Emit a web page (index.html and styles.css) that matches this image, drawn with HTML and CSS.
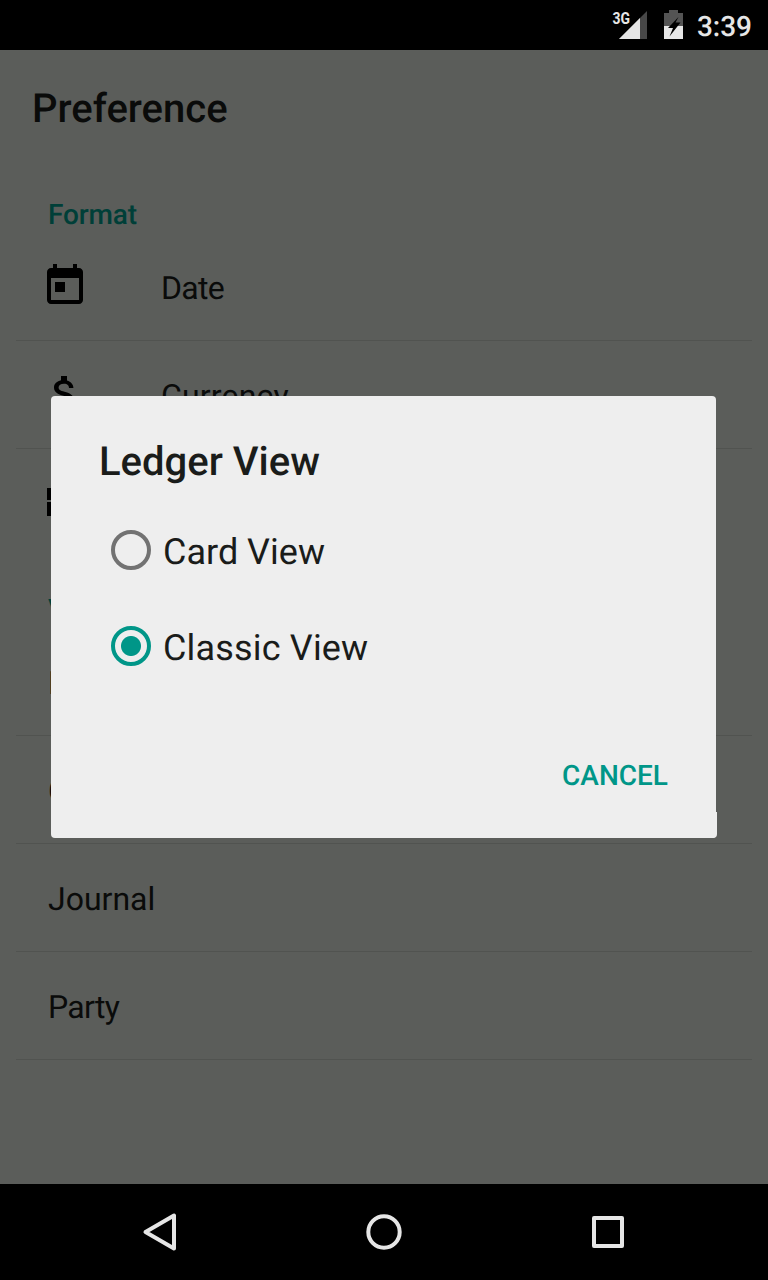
FILE: index.html
```
<!DOCTYPE html>
<html lang="en">
<head>
<meta charset="utf-8">
<title>Preference</title>
<link rel="stylesheet" href="styles.css">
</head>
<body>
<div class="phone">
  <header class="status-bar">
    <svg class="signal" width="36" height="30" viewBox="0 0 36 30">
      <path d="M35 1v28H7z" fill="#474747"/>
      <path d="M28 8v21H7z" fill="#e6e6e6"/>
      <text class="network" x="0.5" y="13.5" textLength="17.5" lengthAdjust="spacingAndGlyphs">3G</text>
    </svg>
    <svg class="battery" width="19" height="29" viewBox="0 0 19 29">
      <path d="M0 3h5V0h9v3h5v13H0z" fill="#545454"/>
      <path d="M0 16h19v13H0z" fill="#e6e6e6"/>
      <path d="M14.500 7L4 18h5l-3.500 8.500L16.500 12.500h-5z" fill="#000"/>
    </svg>
    <span class="clock">3:39</span>
  </header>

  <main class="screen">
    <h1 class="page-title">Preference</h1>

    <section class="group">
      <h2 class="group-title">Format</h2>
      <div class="row">
        <svg class="row-icon" viewBox="0 0 24 24"><path d="M19 3h-1V1h-2v2H8V1H6v2H5c-1.100 0-2 .9-2 2v14c0 1.100.9 2 2 2h14c1.100 0 2-.9 2-2V5c0-1.100-.9-2-2-2zm0 16H5V8h14v11zM7 10h5v5H7z"/></svg>
        <span class="row-label tight">Date</span>
      </div>
      <div class="row">
        <svg class="row-icon" viewBox="0 0 24 24"><path d="M11.800 10.900c-2.270-.59-3-1.200-3-2.150 0-1.090 1.010-1.850 2.700-1.850 1.780 0 2.440.85 2.500 2.100h2.210c-.07-1.720-1.120-3.300-3.210-3.810V3h-3v2.160c-1.940.42-3.500 1.680-3.500 3.610 0 2.310 1.910 3.460 4.700 4.130 2.500.6 3 1.480 3 2.410 0 .69-.49 1.790-2.700 1.790-2.060 0-2.870-.92-2.980-2.100h-2.200c.12 2.190 1.760 3.420 3.680 3.830V21h3v-2.150c1.950-.37 3.500-1.500 3.500-3.550 0-2.840-2.430-3.810-4.700-4.400z"/></svg>
        <span class="row-label loose">Currency</span>
      </div>
      <div class="row row-last">
        <svg class="row-icon" viewBox="0 0 24 24"><path d="M3 19h6v-7H3v7zm7 0h12v-7H10v7zM3 5v6h19V5H3z"/></svg>
        <span class="row-label">Number</span>
      </div>
    </section>

    <section class="group">
      <h2 class="group-title">View</h2>
      <div class="row"><span class="row-label">Ledger</span></div>
      <div class="row"><span class="row-label">Cashbook</span></div>
      <div class="row"><span class="row-label">Journal</span></div>
      <div class="row"><span class="row-label tight">Party</span></div>
    </section>
  </main>

  <nav class="nav-bar">
    <svg class="nav-icon" viewBox="0 0 48 48"><path d="M38 7.500v33L9.500 24z"/></svg>
    <svg class="nav-icon" viewBox="0 0 48 48"><circle cx="24" cy="24" r="15.700"/></svg>
    <svg class="nav-icon" viewBox="0 0 48 48"><rect x="10" y="10" width="28" height="28"/></svg>
  </nav>

  <div class="dialog" role="dialog" aria-label="Ledger View">
    <h2 class="dialog-title">Ledger View</h2>
    <div class="option">
      <span class="radio"></span>
      <span class="option-label">Card View</span>
    </div>
    <div class="option">
      <span class="radio radio-on"></span>
      <span class="option-label loose">Classic View</span>
    </div>
    <div class="actions"><span class="cancel">CANCEL</span></div>
  </div>
</div>
</body>
</html>
```
FILE: styles.css
```
* {
  box-sizing: border-box;
}

body {
  margin: 0;
  background: #000;
  font-family: Roboto, "Noto Sans", sans-serif;
  text-rendering: geometricPrecision;
}

h1,
h2 {
  margin: 0;
  font-weight: 500;
}

.phone {
  position: relative;
  display: flex;
  flex-direction: column;
  width: 768px;
  height: 1280px;
  overflow: hidden;
  will-change: opacity;
}

.tight {
  letter-spacing: -0.7px;
}

.loose {
  letter-spacing: 0.17px;
}

.status-bar {
  display: flex;
  align-items: flex-start;
  justify-content: flex-end;
  height: 50px;
  padding: 10px 16px 0 0;
  background: #000;
  color: #e6e6e6;
}

.signal {
  margin-right: 16px;
}

.network {
  font-size: 16px;
  font-weight: 700;
  fill: #e6e6e6;
  stroke: #000;
  stroke-width: 2px;
  paint-order: stroke;
  text-rendering: auto;
}

.battery {
  margin-right: 14px;
}

.clock {
  padding-top: 1px;
  font-size: 28px;
  font-weight: 500;
  line-height: 32px;
}

.screen {
  flex: 1;
  min-height: 0;
  padding-top: 35px;
  background: #5b5d5a;
  color: #0a0b0a;
}

.page-title {
  padding-left: 32px;
  font-size: 40px;
  line-height: 48px;
}

.group {
  padding: 62px 16px 0;
}

.group + .group {
  padding-top: 33px;
}

.group-title {
  padding: 4px 32px 2px;
  font-size: 28px;
  line-height: 32px;
  letter-spacing: -0.15px;
  color: #003f38;
}

.row {
  display: flex;
  height: 108px;
  padding-left: 32px;
  border-bottom: 1px solid #515350;
}

.row-last {
  border-bottom-color: transparent;
}

.row-icon {
  width: 48px;
  height: 48px;
  margin: 29px 72px 0 -7px;
  fill: #000;
}

.row-label {
  padding-top: 35px;
  font-size: 32px;
  line-height: 40px;
}

.nav-bar {
  display: flex;
  justify-content: center;
  gap: 176px;
  height: 96px;
  padding-top: 24px;
  background: #000;
}

.nav-icon {
  width: 48px;
  height: 48px;
  fill: none;
  stroke: #e6e6e6;
  stroke-width: 4;
  stroke-linejoin: round;
}

.dialog {
  position: absolute;
  top: 396px;
  left: 51px;
  width: 665px;
  height: 442px;
  padding: 42px 48px 0;
  border-radius: 4px;
  background: #eee;
  color: #1a1c1a;
}

/* The lower edge of the card is one pixel wider. */
.dialog::after {
  content: "";
  position: absolute;
  right: -1px;
  bottom: 0;
  width: 8px;
  height: 26px;
  border-bottom-right-radius: 4px;
  background: #eee;
}

.dialog-title {
  margin-bottom: 16px;
  font-size: 40px;
  line-height: 48px;
}

.option {
  display: flex;
  align-items: center;
  height: 96px;
  padding-left: 12px;
}

.radio {
  width: 40px;
  height: 40px;
  margin-right: 12px;
  border: 4px solid #727272;
  border-radius: 50%;
}

.radio-on {
  border-color: #009688;
  background: radial-gradient(circle, #009688 9.500px, transparent 10.500px);
}

.option-label {
  padding-top: 3px;
  font-size: 36px;
  line-height: 44px;
}

.actions {
  display: flex;
  justify-content: flex-end;
  padding-top: 66px;
}

.cancel {
  font-size: 28px;
  font-weight: 500;
  line-height: 32px;
  color: #009688;
}
```
